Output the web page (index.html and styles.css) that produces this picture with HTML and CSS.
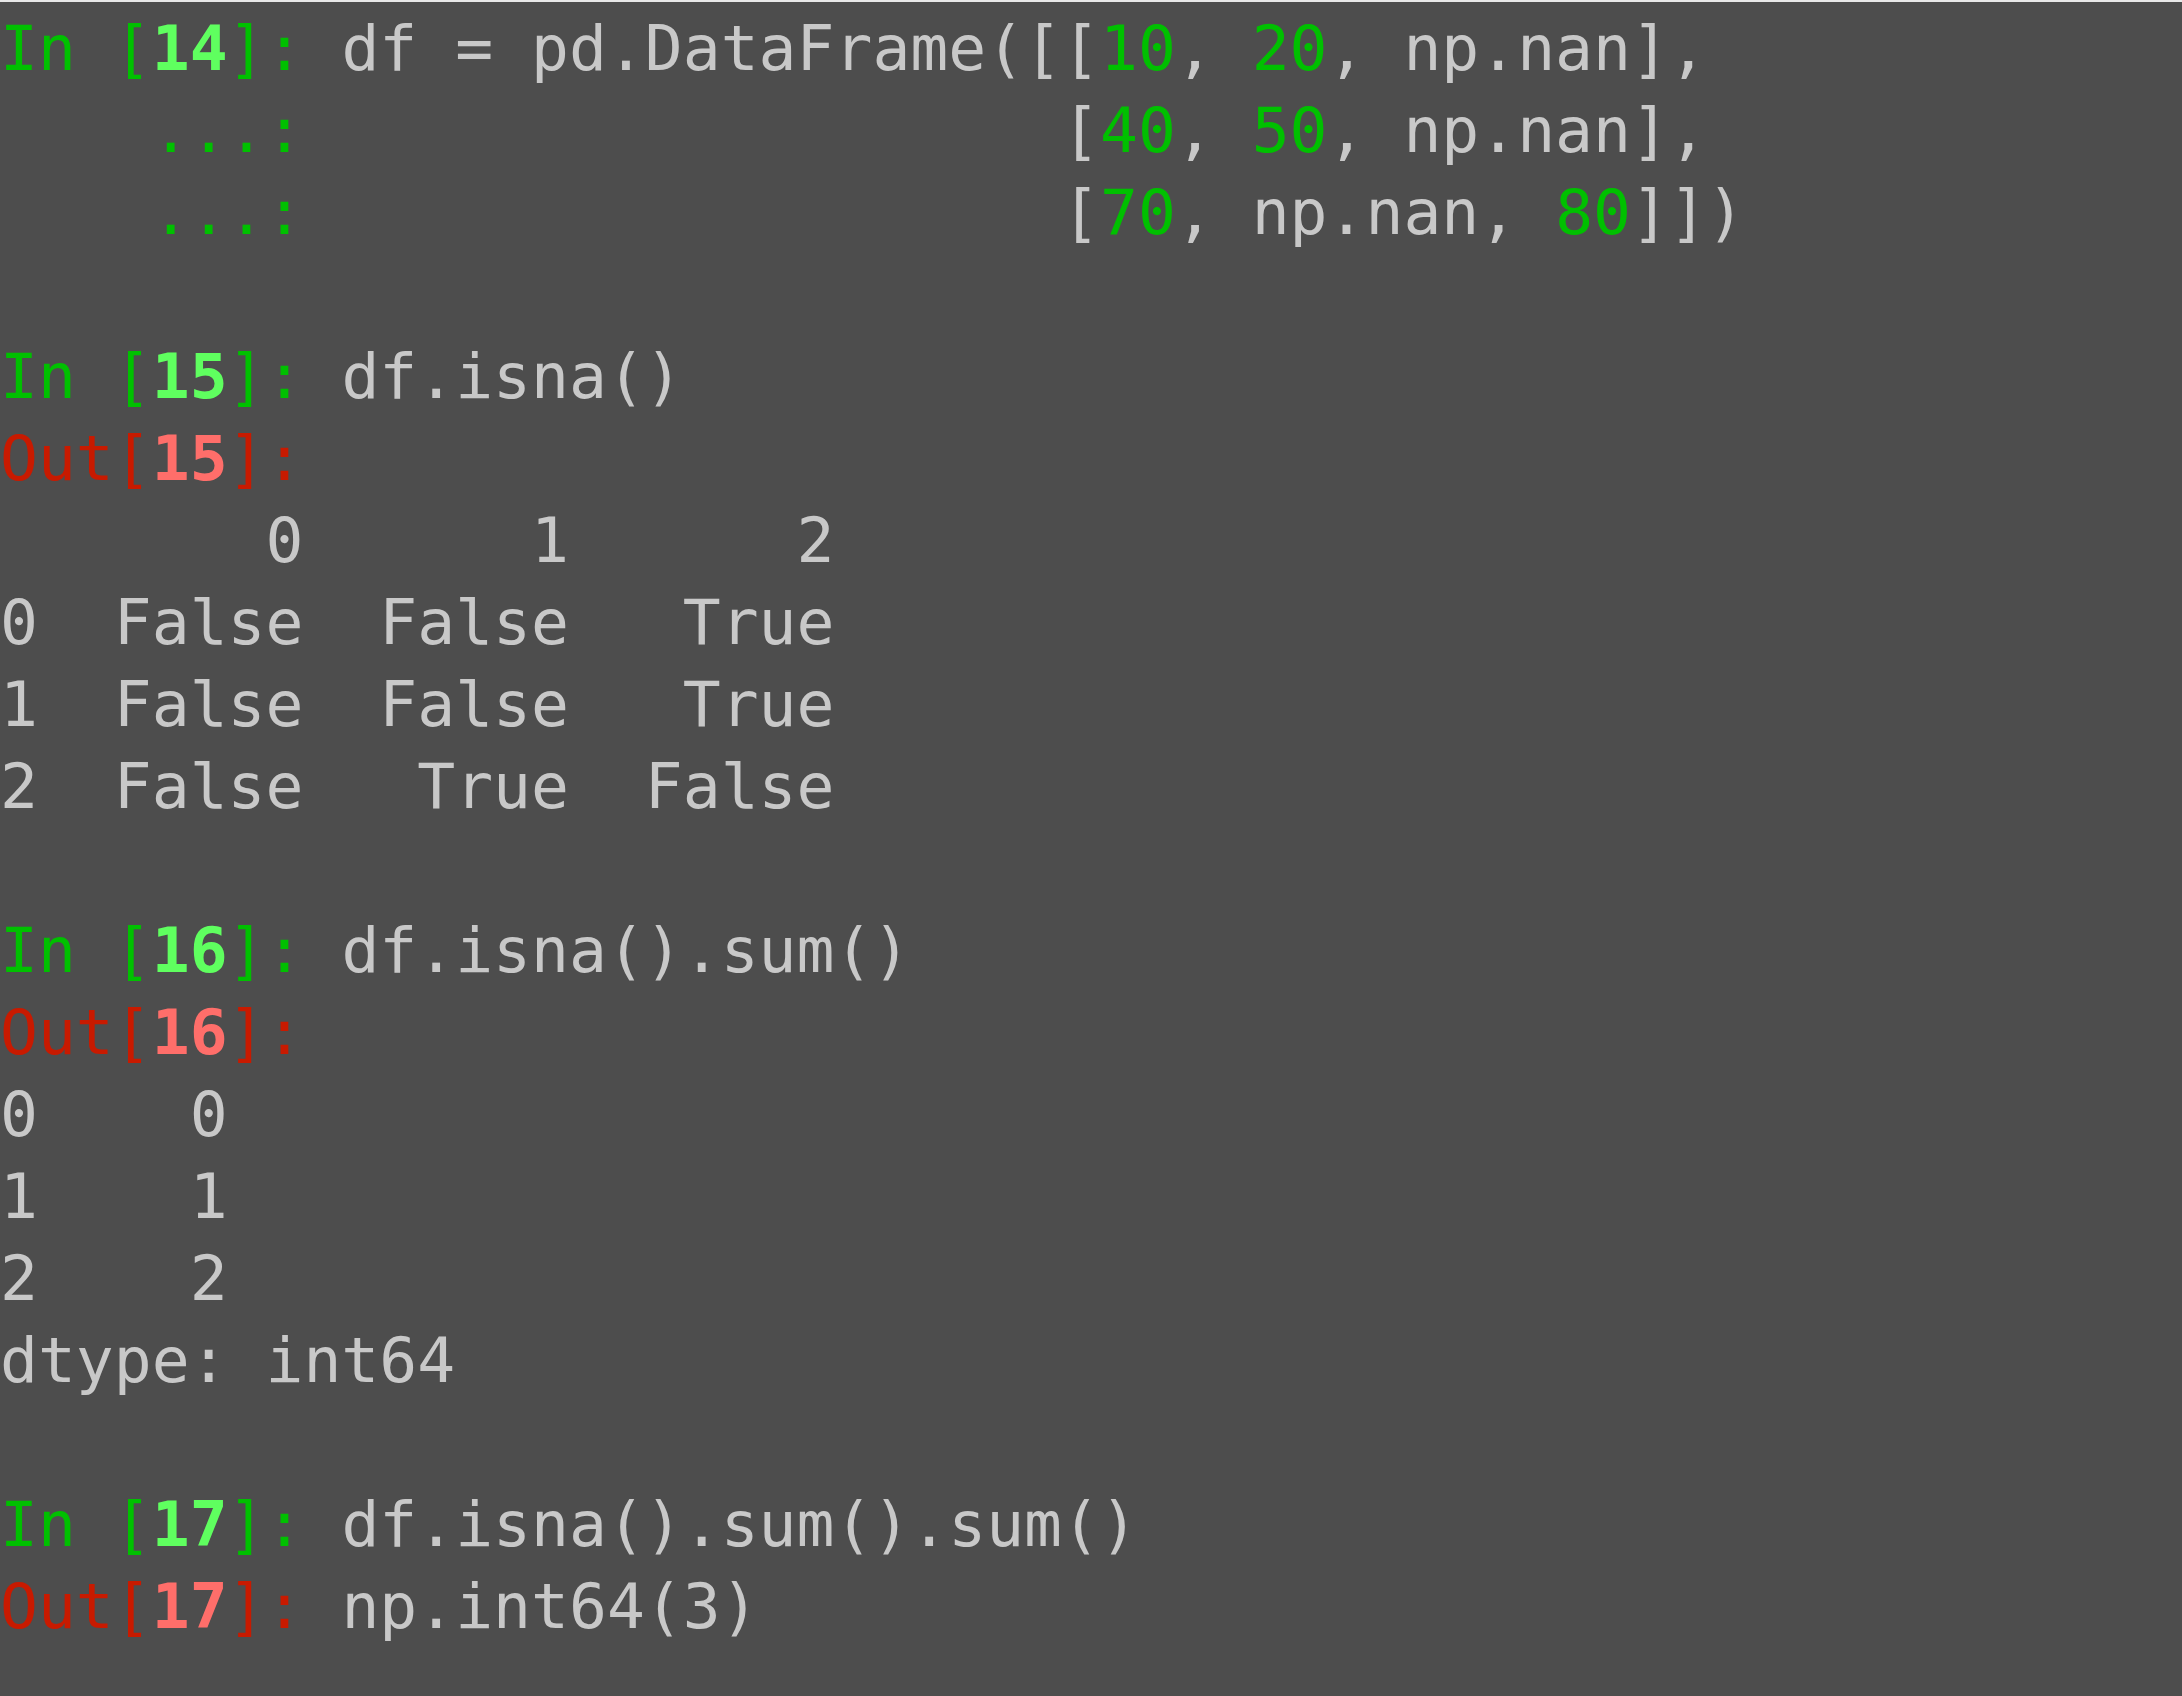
FILE: index.html
```html
<!DOCTYPE html>
<html>
<head>
<meta charset="utf-8">
<link rel="stylesheet" href="styles.css">
</head>
<body>
<pre class="term"><span class="pin">In [</span><span class="pinn">14</span><span class="pin">]: </span>df = pd.DataFrame([[<span class="num">10</span>, <span class="num">20</span>, np.nan],
<span class="pin">    ...: </span>                   [<span class="num">40</span>, <span class="num">50</span>, np.nan],
<span class="pin">    ...: </span>                   [<span class="num">70</span>, np.nan, <span class="num">80</span>]])

<span class="pin">In [</span><span class="pinn">15</span><span class="pin">]: </span>df.isna()
<span class="pout">Out[</span><span class="poutn">15</span><span class="pout">]:</span>
       0      1      2
0  False  False   True
1  False  False   True
2  False   True  False

<span class="pin">In [</span><span class="pinn">16</span><span class="pin">]: </span>df.isna().sum()
<span class="pout">Out[</span><span class="poutn">16</span><span class="pout">]:</span>
0    0
1    1
2    2
dtype: int64

<span class="pin">In [</span><span class="pinn">17</span><span class="pin">]: </span>df.isna().sum().sum()
<span class="pout">Out[</span><span class="poutn">17</span><span class="pout">]: </span>np.int64(3)
</pre>
</body>
</html>
```
FILE: styles.css
```css
html, body {
  margin: 0;
  padding: 0;
  background: #4d4d4d;
}
body {
  border-top: 2px solid #e8e8e8;
  min-height: 1694px;
}
.term {
  margin: 0;
  padding: 6px 0 0 0;
  font-family: "DejaVu Sans Mono", monospace;
  font-size: 63px;
  line-height: 82px;
  color: #c8c8c8;
}
.pin { color: #00c000; }
.pinn { color: #5fff5f; font-weight: bold; }
.pout { color: #c81a00; }
.poutn { color: #ff6e6a; font-weight: bold; }
.num { color: #00c000; }
```
